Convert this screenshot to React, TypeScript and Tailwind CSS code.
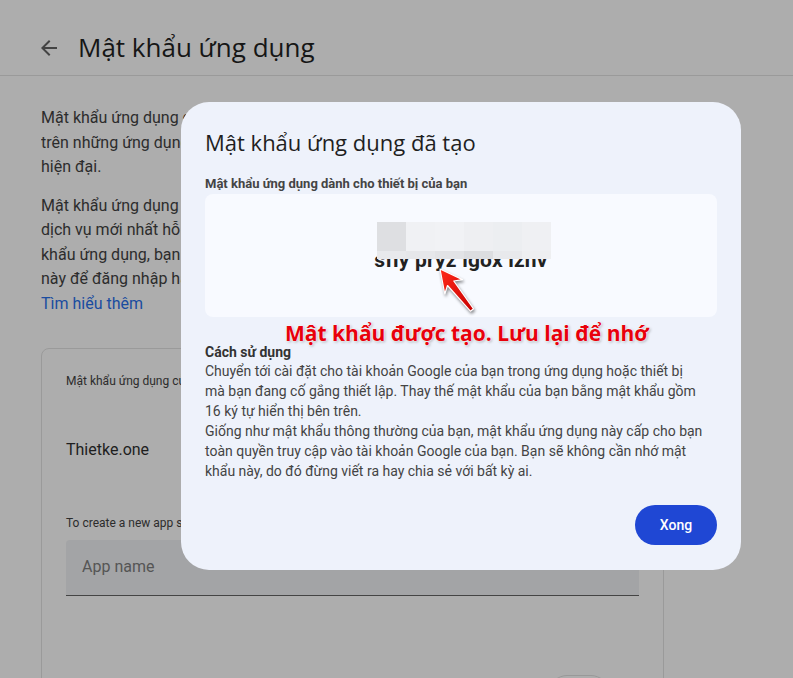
import { type ReactNode } from 'react'

const mosaic = [
    ['#dedfe2', '#f0f1f4', '#f1f2f5', '#eeeff2', '#eceef1', '#eff0f3'],
    ['#e8e9ec', '#e6e7ea', '#e2e3e6', '#dcdde0', '#e8e9ec', '#eeeff1'],
]

function Line({ children }: { children: ReactNode }) {
    return <div className="whitespace-nowrap overflow-hidden">{children}</div>
}

function RedArrow() {
    return (
        <svg
            className="absolute left-[425px] top-[261px] drop-shadow-[1px_2px_1.5px_rgba(0,0,0,0.45)]"
            width="62"
            height="62"
            viewBox="0 0 62 62"
        >
            <defs>
                <linearGradient id="redg" x1="0" y1="0" x2="1" y2="1">
                    <stop offset="0" stopColor="#ff2a1a" />
                    <stop offset="1" stopColor="#c80000" />
                </linearGradient>
            </defs>
            <path
                d="M15 8 L19.8 33 L22.5 24.5 L45.4 50.2 L48.6 47.8 L28.8 20 L37.5 18.6 Z"
                fill="url(#redg)"
                stroke="#ffffff"
                strokeWidth="1.2"
                strokeLinejoin="round"
            />
        </svg>
    )
}

export default function App() {
    return (
        <div className="relative w-[793px] h-[678px] overflow-hidden bg-[#adadad] font-['Roboto',sans-serif]">
            {/* page behind the scrim */}
            <header className="h-[76px] pt-[20px] flex items-center border-b border-[#9a9a9a]">
                <svg className="ml-[37px]" width="24" height="24" viewBox="0 0 24 24" fill="#444">
                    <path d="M20 11H7.83l5.59-5.59L12 4l-8 8 8 8 1.41-1.41L7.83 13H20v-2z" />
                </svg>
                <h1 className="ml-[17px] text-[26px] text-[#161616] font-['Open_Sans',sans-serif]">Mật khẩu ứng dụng</h1>
            </header>

            <div className="px-[41px] pt-[30px] text-[16px] leading-[24.5px] text-[#2c2c2c]">
                <div className="w-[600px]">
                    <Line>Mật khẩu ứng dụng giúp bạn đăng nhập vào Tài khoản Google</Line>
                    <Line>trên những ứng dụng và dịch vụ cũ không hỗ trợ các tiêu chuẩn</Line>
                    <Line>hiện đại.</Line>
                    <div className="h-[14px]" />
                    <Line>Mật khẩu ứng dụng kém an toàn hơn so với việc sử dụng các ứng</Line>
                    <Line>dịch vụ mới nhất hỗ trợ tiêu chuẩn bảo mật hiện đại. Trước khi tạo</Line>
                    <Line>khẩu ứng dụng, bạn nên kiểm tra xem ứng dụng có cần mật khẩu</Line>
                    <Line>này để đăng nhập hay không.</Line>
                    <Line>
                        <span className="text-[#1a4ca0]">Tìm hiểu thêm</span>
                    </Line>
                </div>

                <div className="mt-[32px] w-[623px] h-[400px] border border-[#9a9a9a] rounded-[8px] px-[24px] pt-[24px]">
                    <div className="text-[12px] leading-[16px] text-[#2c2c2c]">Mật khẩu ứng dụng của bạn</div>
                    <div className="mt-[49px] text-[16px] leading-[24px] text-[#1e1e1e]">Thietke.one</div>
                    <div className="mt-[53px] text-[12px] leading-[16px] text-[#2c2c2c] whitespace-nowrap">
                        To create a new app specific password, type a name for it below...
                    </div>
                    <div className="mt-[9px] h-[56px] bg-[#a3a4a6] border-b border-[#444] rounded-t-[4px] flex items-center px-[16px] text-[16px] text-[#555]">
                        App name
                    </div>
                    <div className="mt-[79px] flex justify-end pr-[30px]">
                        <div className="w-[60px] h-[36px] rounded-full border border-[#999]" />
                    </div>
                </div>
            </div>

            {/* dialog */}
            <div className="absolute left-[181px] top-[102px] w-[560px] h-[468px] rounded-[28px] bg-[#eef2fb] px-[24px] pt-[26px]">
                <h2 className="text-[22px] leading-[28px] text-[#1f1f1f] font-['Open_Sans',sans-serif]">
                    Mật khẩu ứng dụng đã tạo
                </h2>
                <div className="mt-[20px] text-[13px] leading-[16px] font-bold text-[#444]">
                    Mật khẩu ứng dụng dành cho thiết bị của bạn
                </div>
                <div className="mt-[2px] h-[123px] rounded-[8px] bg-[#f8faff] flex items-center justify-center">
                    <span className="mt-[10px] text-[21px] font-bold text-[#222] tracking-[0.2px]">sfiy pryz igox lzhv</span>
                </div>
                <div className="mt-[26px] text-[14px] leading-[18px] font-bold text-[#333]">Cách sử dụng</div>
                <div className="text-[14px] leading-[20px] text-[#444]">
                    Chuyển tới cài đặt cho tài khoản Google của bạn trong ứng dụng hoặc thiết bị
                    <br />
                    mà bạn đang cố gắng thiết lập. Thay thế mật khẩu của bạn bằng mật khẩu gồm
                    <br />
                    16 ký tự hiển thị bên trên.
                    <br />
                    Giống như mật khẩu thông thường của bạn, mật khẩu ứng dụng này cấp cho bạn
                    <br />
                    toàn quyền truy cập vào tài khoản Google của bạn. Bạn sẽ không cần nhớ mật
                    <br />
                    khẩu này, do đó đừng viết ra hay chia sẻ với bất kỳ ai.
                </div>
                <div className="mt-[24px] flex justify-end">
                    <button className="w-[82px] h-[40px] rounded-full bg-[#1f47d4] text-white text-[14px] font-medium">
                        Xong
                    </button>
                </div>
            </div>

            {/* blurred password mosaic */}
            <div className="absolute left-[377px] top-[222px] grid grid-cols-[repeat(6,29px)] grid-rows-[29px_8px]">
                {mosaic.flat().map((c, i) => (
                    <div key={i} style={{ backgroundColor: c }} />
                ))}
            </div>

            <RedArrow />

            <div className="absolute left-[285px] top-[318px] text-[21px] leading-[30px] font-bold text-[#e8000b] font-['Open_Sans',sans-serif] whitespace-nowrap [text-shadow:0_0_2px_#fff,0_0_2px_#fff,1px_1px_3px_rgba(0,0,0,0.35)]">
                Mật khẩu được tạo. Lưu lại để nhớ
            </div>
        </div>
    )
}
